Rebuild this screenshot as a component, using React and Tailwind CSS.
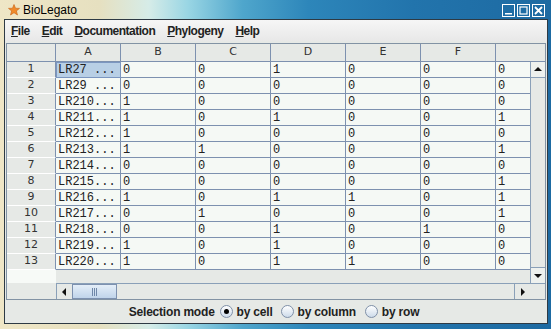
import React from 'react';

const rows = [
  ['LR27 ...', '0', '0', '1', '0', '0', '0'],
  ['LR29 ...', '0', '0', '0', '0', '0', '0'],
  ['LR210...', '1', '0', '0', '0', '0', '0'],
  ['LR211...', '1', '0', '1', '0', '0', '1'],
  ['LR212...', '1', '0', '0', '0', '0', '0'],
  ['LR213...', '1', '1', '0', '0', '0', '1'],
  ['LR214...', '0', '0', '0', '0', '0', '0'],
  ['LR215...', '0', '0', '0', '0', '0', '1'],
  ['LR216...', '1', '0', '1', '1', '0', '1'],
  ['LR217...', '0', '1', '0', '0', '0', '1'],
  ['LR218...', '0', '0', '1', '0', '1', '0'],
  ['LR219...', '1', '0', '1', '0', '0', '0'],
  ['LR220...', '1', '0', '1', '1', '0', '0'],
];

const cols = [
  { name: 'A', w: 'w-[65px]' },
  { name: 'B', w: 'w-[75px]' },
  { name: 'C', w: 'w-[75px]' },
  { name: 'D', w: 'w-[75px]' },
  { name: 'E', w: 'w-[75px]' },
  { name: 'F', w: 'w-[75px]' },
];

const Star = () => (
  <svg width="12" height="12" viewBox="0 0 12 12">
    <path d="M6 0.5 L7.5 4.2 L11.5 4.4 L8.4 6.9 L9.5 11 L6 8.7 L2.5 11 L3.6 6.9 L0.5 4.4 L4.5 4.2 Z" fill="#f08a2a" stroke="#c86010" strokeWidth="0.6" />
  </svg>
);

const TitleButton = ({ kind }) => (
  <div className="w-[13px] h-[13px] border border-white flex items-center justify-center">
    <svg width="11" height="11" viewBox="0 0 11 11">
      {kind === 'min' && <rect x="2" y="8" width="7" height="1.5" fill="white" />}
      {kind === 'max' && <rect x="2" y="2" width="7" height="7" fill="none" stroke="white" strokeWidth="1.2" />}
      {kind === 'close' && <path d="M2 2 L9 9 M9 2 L2 9" stroke="white" strokeWidth="1.8" />}
    </svg>
  </div>
);

const Radio = ({ checked }) => (
  <div className="w-[13px] h-[13px] rounded-full border border-[#7f90a8] bg-[linear-gradient(180deg,#ffffff,#cddbea)] flex items-center justify-center">
    {checked && <div className="w-[5px] h-[5px] rounded-full bg-black" />}
  </div>
);

const Arrow = ({ dir }) => {
  const d = {
    up: 'M1 6 L5 2 L9 6 Z',
    down: 'M1 3 L5 7 L9 3 Z',
    left: 'M6 1 L2 5 L6 9 Z',
    right: 'M3 1 L7 5 L3 9 Z',
  }[dir];
  return (
    <svg width="10" height="10" viewBox="0 0 10 10">
      <path d={d} fill="#111" />
    </svg>
  );
};

export default function App() {
  return (
    <div className="w-[551px] h-[329px] flex flex-col overflow-hidden bg-[linear-gradient(90deg,#efe6c6_0%,#e6e0c0_18%,#d6ece8_27%,#9ad6e4_34%,#4fa6cc_44%,#2d86ba_56%,#2274ac_75%,#1d6aa2_100%)] font-['Liberation_Sans',sans-serif]">
      {/* title bar */}
      <div className="h-[19px] flex items-center pl-[8px] pr-[6px]">
        <Star />
        <span className="ml-[3px] text-[12px] text-black leading-none">BioLegato</span>
        <div className="ml-auto flex gap-[2px] mt-[1px]">
          <TitleButton kind="min" />
          <TitleButton kind="max" />
          <TitleButton kind="close" />
        </div>
      </div>

      <div className="flex-1 ml-[4px] mr-[3px] mb-[5px] border border-[#2e3a44] bg-[#e6e9e6] flex flex-col">
        {/* menu bar */}
        <div className="h-[21px] flex items-center bg-[linear-gradient(180deg,#f6f6f6,#e8e8e8)] text-[12px] font-bold tracking-[-0.5px] text-[#222] pt-[1px]">
          <span className="px-[6px]"><span className="underline">F</span>ile</span>
          <span className="px-[6px]"><span className="underline">E</span>dit</span>
          <span className="px-[6px]"><span className="underline">D</span>ocumentation</span>
          <span className="px-[6px]"><span className="underline">P</span>hylogeny</span>
          <span className="px-[6px]"><span className="underline">H</span>elp</span>
        </div>

        {/* content */}
        <div className="flex-1 flex flex-col pt-[2px] px-[1px]">
          <div className="h-[257px] border border-[#8293a4] flex flex-col">
            {/* header row */}
            <div className="h-[18px] flex bg-[#e6e9e6] border-b border-[#7d91af] text-[11px] text-[#333] font-['DejaVu_Sans',sans-serif]">
              <div className="w-[49px] border-r border-[#7d91af]" />
              {cols.map((c) => (
                <div key={c.name} className={`${c.w} border-r border-[#7d91af] flex items-center justify-center`}>
                  {c.name}
                </div>
              ))}
              <div className="w-[49px]" />
            </div>

            {/* body */}
            <div className="h-[221px] flex">
              <div className="w-[523px] flex flex-col">
                {rows.map((r, i) => (
                  <div key={i} className="h-[16px] flex">
                    <div className="w-[49px] border-r border-r-[#7d91af] border-b border-b-white bg-[#e6e9e6] flex items-center justify-center text-[11px] text-[#333] font-['DejaVu_Sans',sans-serif]">
                      {i + 1}
                    </div>
                    {r.slice(0, 6).map((v, j) => (
                      <div
                        key={j}
                        className={`${cols[j].w} border-r border-b border-[#7d91af] flex items-center pl-[2px] text-[12px] text-[#222] font-['Liberation_Mono',monospace] ${
                          i === 0 && j === 0 ? 'bg-[#b8cfe5] outline outline-1 -outline-offset-1 outline-[#7b96c0]' : 'bg-[#f5f9f5]'
                        }`}
                      >
                        {v}
                      </div>
                    ))}
                    <div className="w-[34px] border-b border-[#7d91af] bg-[#f5f9f5] flex items-center pl-[2px] text-[12px] text-[#222] font-['Liberation_Mono',monospace]">
                      {r[6]}
                    </div>
                  </div>
                ))}
                <div className="flex-1 flex">
                  <div className="w-[49px] bg-[#f7faf7]" />
                  <div className="flex-1 bg-[#e6e9e6]" />
                </div>
              </div>

              {/* vertical scrollbar */}
              <div className="w-[15px] flex flex-col border-l border-[#8aa0b8] bg-[#e6e9e6]">
                <div className="h-[16px] border-b border-[#8aa0b8] bg-[#eef1ee] flex items-center justify-center">
                  <Arrow dir="up" />
                </div>
                <div className="flex-1" />
                <div className="h-[16px] border-t border-[#8aa0b8] bg-[#eef1ee] flex items-center justify-center">
                  <Arrow dir="down" />
                </div>
              </div>
            </div>

            {/* horizontal scrollbar row */}
            <div className="h-[16px] flex bg-[#e6e9e6]">
              <div className="w-[49px]" />
              <div className="w-[474px] flex border-t border-l border-[#8aa0b8]">
                <div className="w-[15px] flex items-center justify-center">
                  <Arrow dir="left" />
                </div>
                <div className="w-[45px] border border-[#7d91af] bg-[linear-gradient(180deg,#e4eef8,#c0d4ea)] flex items-center justify-center gap-[1px]">
                  <div className="w-[1px] h-[8px] bg-[#6f87a8]" />
                  <div className="w-[1px] h-[8px] bg-[#6f87a8]" />
                  <div className="w-[1px] h-[8px] bg-[#6f87a8]" />
                </div>
                <div className="flex-1" />
                <div className="w-[16px] border-l border-[#8aa0b8] flex items-center justify-center">
                  <Arrow dir="right" />
                </div>
              </div>
              <div className="w-[15px] border-t border-[#8aa0b8]" />
            </div>
          </div>

          {/* selection mode panel */}
          <div className="flex-1 flex items-center justify-center text-[12px] font-bold tracking-[-0.2px] text-[#222] pr-[4px]">
            <span className="mr-[5px]">Selection mode</span>
            <div className="flex items-center gap-[4px] mr-[8px]">
              <Radio checked />
              <span>by cell</span>
            </div>
            <div className="flex items-center gap-[4px] mr-[9px]">
              <Radio />
              <span>by column</span>
            </div>
            <div className="flex items-center gap-[4px]">
              <Radio />
              <span>by row</span>
            </div>
          </div>
        </div>
      </div>
    </div>
  );
}
